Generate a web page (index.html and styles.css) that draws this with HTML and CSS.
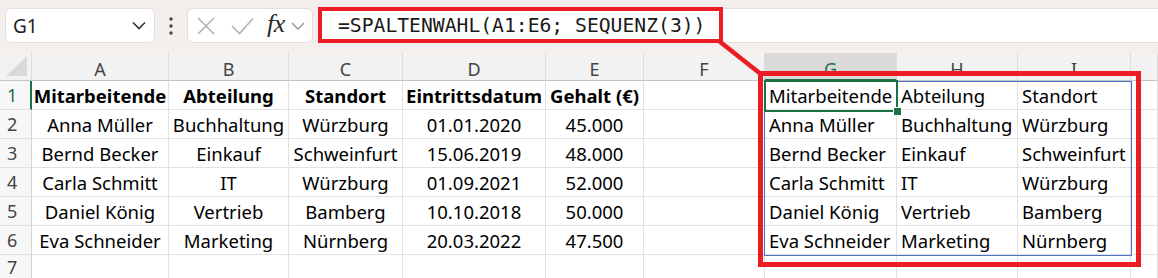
FILE: index.html
```html
<!DOCTYPE html>
<html lang="de">
<head>
<meta charset="utf-8">
<title>SPALTENWAHL</title>
<link rel="stylesheet" href="styles.css">
</head>
<body>
<div class="app">
  <div class="toolbar">
    <div class="namebox">
      <span class="name">G1</span>
      <svg class="chev" width="14" height="9" viewBox="0 0 14 9"><polyline points="1,1.5 7,7.5 13,1.5" fill="none" stroke="#333" stroke-width="1.6"/></svg>
    </div>
    <div class="more">
      <svg width="6" height="20" viewBox="0 0 6 20"><circle cx="3" cy="3" r="1.7" fill="#444"/><circle cx="3" cy="10" r="1.7" fill="#444"/><circle cx="3" cy="17" r="1.7" fill="#444"/></svg>
    </div>
    <div class="fxbox">
      <svg class="ico-x" width="18" height="18" viewBox="0 0 18 18"><path d="M1 1 L17 17 M17 1 L1 17" stroke="#b3b3b3" stroke-width="1.6" fill="none"/></svg>
      <svg class="ico-ok" width="23" height="18" viewBox="0 0 23 18"><polyline points="1,9 8.5,16.5 22,1.5" fill="none" stroke="#b3b3b3" stroke-width="1.6"/></svg>
      <span class="fx">fx</span>
      <svg class="chev-s" width="14" height="8" viewBox="0 0 14 8"><polyline points="1,1 7,7 13,1" fill="none" stroke="#9a9a9a" stroke-width="1.5"/></svg>
    </div>
    <div class="formula">=SPALTENWAHL(A1:E6; SEQUENZ(3))</div>
  </div>

  <div class="sheet">
    <div class="corner"><svg width="22" height="21" viewBox="0 0 22 21"><polygon points="21,0 21,20 0,20" fill="#d9d9d9"/></svg></div>
    <div class="ch">A</div><div class="ch">B</div><div class="ch">C</div><div class="ch">D</div><div class="ch">E</div><div class="ch">F</div><div class="ch sel">G</div><div class="ch">H</div><div class="ch">I</div><div class="ch"></div>

    <div class="rh sel">1</div>
    <div class="c b">Mitarbeitende</div><div class="c b">Abteilung</div><div class="c b">Standort</div><div class="c b">Eintrittsdatum</div><div class="c b">Gehalt (€)</div><div class="c"></div>
    <div class="c l">Mitarbeitende</div><div class="c l">Abteilung</div><div class="c l">Standort</div><div class="c"></div>

    <div class="rh">2</div>
    <div class="c">Anna Müller</div><div class="c">Buchhaltung</div><div class="c">Würzburg</div><div class="c">01.01.2020</div><div class="c">45.000</div><div class="c"></div>
    <div class="c l">Anna Müller</div><div class="c l">Buchhaltung</div><div class="c l">Würzburg</div><div class="c"></div>

    <div class="rh">3</div>
    <div class="c">Bernd Becker</div><div class="c">Einkauf</div><div class="c">Schweinfurt</div><div class="c">15.06.2019</div><div class="c">48.000</div><div class="c"></div>
    <div class="c l">Bernd Becker</div><div class="c l">Einkauf</div><div class="c l">Schweinfurt</div><div class="c"></div>

    <div class="rh">4</div>
    <div class="c">Carla Schmitt</div><div class="c">IT</div><div class="c">Würzburg</div><div class="c">01.09.2021</div><div class="c">52.000</div><div class="c"></div>
    <div class="c l">Carla Schmitt</div><div class="c l">IT</div><div class="c l">Würzburg</div><div class="c"></div>

    <div class="rh">5</div>
    <div class="c">Daniel König</div><div class="c">Vertrieb</div><div class="c">Bamberg</div><div class="c">10.10.2018</div><div class="c">50.000</div><div class="c"></div>
    <div class="c l">Daniel König</div><div class="c l">Vertrieb</div><div class="c l">Bamberg</div><div class="c"></div>

    <div class="rh">6</div>
    <div class="c">Eva Schneider</div><div class="c">Marketing</div><div class="c">Nürnberg</div><div class="c">20.03.2022</div><div class="c">47.500</div><div class="c"></div>
    <div class="c l">Eva Schneider</div><div class="c l">Marketing</div><div class="c l">Nürnberg</div><div class="c"></div>

    <div class="rh last">7</div>
    <div class="c"></div><div class="c"></div><div class="c"></div><div class="c"></div><div class="c"></div><div class="c"></div><div class="c"></div><div class="c"></div><div class="c"></div><div class="c"></div>
  </div>

  <div class="spill"></div>
  <div class="selection"><span class="handle"></span></div>

  <svg class="annot" width="1158" height="278" viewBox="0 0 1158 278">
    <rect x="320" y="9" width="401" height="32" fill="none" stroke="#ec1c24" stroke-width="4"/>
    <line x1="719" y1="41" x2="762" y2="75" stroke="#ec1c24" stroke-width="4.5"/>
    <rect x="760.5" y="73.5" width="378" height="191" fill="none" stroke="#ec1c24" stroke-width="5"/>
  </svg>
</div>
</body>
</html>
```

FILE: styles.css
```css
* {
  box-sizing: border-box;
  margin: 0;
  padding: 0;
}

body {
  margin: 0;
  background: #ffffff;
  font-family: "Noto Sans", "Open Sans", sans-serif;
  overflow: hidden;
}

.app {
  position: relative;
  width: 1158px;
  height: 278px;
  overflow: hidden;
}

/* ---------- toolbar ---------- */
.toolbar {
  display: flex;
  height: 53px;
  padding: 8px 0 10px 5px;
  gap: 5px;
  background: #f4efed;
}

.namebox {
  width: 150px;
  display: flex;
  align-items: center;
  justify-content: space-between;
  padding: 0 8px 0 7px;
  background: #ffffff;
  border: 1px solid #e3dddb;
  border-radius: 6px;
}

.name {
  font-size: 19px;
  color: #222222;
}

.more {
  width: 22px;
  display: flex;
  align-items: center;
  justify-content: center;
}

.fxbox {
  width: 126px;
  display: flex;
  align-items: center;
  padding-left: 9px;
  background: #ffffff;
  border: 1px solid #e3dddb;
  border-radius: 6px;
}

.ico-x {
  margin-right: 16px;
}

.ico-ok {
  margin-right: 13px;
  margin-top: 1px;
}

.fx {
  font-family: "Liberation Serif", "DejaVu Serif", serif;
  font-style: italic;
  font-size: 26px;
  color: #2a2a2a;
  margin-right: 6px;
  margin-top: -3px;
  letter-spacing: -0.5px;
}

.chev-s {
  margin-top: 1px;
}

.formula {
  flex: 1;
  display: flex;
  align-items: center;
  padding-left: 19px;
  background: #ffffff;
  border: 1px solid #e3dddb;
  border-right: none;
  border-radius: 6px 0 0 6px;
  font-family: "DejaVu Sans Mono", "Liberation Mono", monospace;
  font-size: 19.7px;
  color: #1a1a1a;
  white-space: nowrap;
}

/* ---------- sheet ---------- */
.sheet {
  display: grid;
  grid-template-columns: 32px 137px 120px 114px 143px 98px 121px 132px 121px 113px 1fr;
  grid-template-rows: 28px repeat(7, 29px);
}

.corner {
  background: #f2f2f2;
  border-right: 1px solid #dcdcdc;
  border-bottom: 1px solid #c4c4c4;
  display: flex;
  align-items: flex-end;
  justify-content: flex-end;
  padding: 0 3px 3px 0;
}

.ch {
  background: #f2f2f2;
  border-right: 1px solid #dcdcdc;
  border-bottom: 1px solid #c4c4c4;
  text-align: center;
  font-size: 18px;
  line-height: 18px;
  padding-top: 7px;
  color: #444444;
}

.ch.sel {
  background: #dadada;
  color: #1e7145;
  border-bottom: 2px solid #1e7145;
}

.rh {
  background: #f7f7f7;
  border-right: 1px solid #d4d4d4;
  border-bottom: 1px solid #e1e1e1;
  display: flex;
  align-items: center;
  padding-left: 7px;
  font-size: 18px;
  color: #444444;
}

.rh.last {
  align-items: flex-start;
  line-height: 22px;
  padding-top: 1px;
}

.rh.sel {
  color: #1e7145;
  border-right: 2px solid #1e7145;
}

.c {
  border-right: 1px solid #e1e1e1;
  border-bottom: 1px solid #e1e1e1;
  display: flex;
  align-items: center;
  justify-content: center;
  font-size: 18.5px;
  color: #000000;
  white-space: nowrap;
  overflow: visible;
}

.c.l {
  justify-content: flex-start;
  padding-left: 4px;
}

.c.b {
  font-weight: 700;
}

/* ---------- overlays ---------- */
.spill {
  position: absolute;
  left: 764px;
  top: 81px;
  width: 368px;
  height: 175px;
  border: 1px solid #4a72c6;
  pointer-events: none;
}

.selection {
  position: absolute;
  left: 764px;
  top: 80px;
  width: 134px;
  height: 32px;
  border: 2px solid #1e7145;
  pointer-events: none;
}

.handle {
  position: absolute;
  right: -6px;
  bottom: -6px;
  width: 9px;
  height: 9px;
  background: #1e7145;
  border: 1px solid #ffffff;
}

.annot {
  position: absolute;
  left: 0;
  top: 0;
  pointer-events: none;
}
```
